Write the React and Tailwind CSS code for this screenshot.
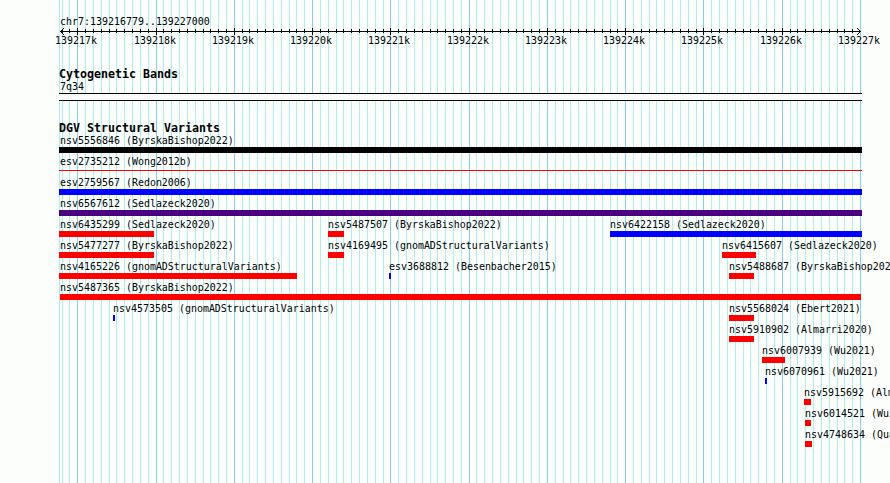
import React from 'react';
import clsx from 'clsx';

const REGION = { chr: 'chr7', start: 139216779, end: 139227000 };
const PAD_LEFT = 60;
const PLOT_WIDTH = 800;

const toX = (bp) =>
  Math.round(PAD_LEFT + ((bp - REGION.start) / (REGION.end - REGION.start)) * PLOT_WIDTH);

const TICKS = [];
for (let bp = 139216800; bp <= REGION.end; bp += 100) {
  TICKS.push({ bp, x: toX(bp), major: bp % 1000 === 0 });
}
const MAJOR_TICKS = TICKS.filter((t) => t.major);

const COLORS = {
  black: 'bg-black',
  red: 'bg-[#ff0000]',
  blue: 'bg-[#0000ff]',
  purple: 'bg-[#4b0082]',
};

// x / w are pixels inside the panel, one array per bumped row
const ROWS = [
  [{ name: 'nsv5556846 (ByrskaBishop2022)', x: 59, w: 803, color: 'black' }],
  [{ name: 'esv2735212 (Wong2012b)', x: 59, w: 803, color: 'red', thin: true }],
  [{ name: 'esv2759567 (Redon2006)', x: 59, w: 803, color: 'blue' }],
  [{ name: 'nsv6567612 (Sedlazeck2020)', x: 59, w: 803, color: 'purple' }],
  [
    { name: 'nsv6435299 (Sedlazeck2020)', x: 59, w: 95, color: 'red' },
    { name: 'nsv5487507 (ByrskaBishop2022)', x: 328, w: 16, color: 'red' },
    { name: 'nsv6422158 (Sedlazeck2020)', x: 610, w: 252, color: 'blue' },
  ],
  [
    { name: 'nsv5477277 (ByrskaBishop2022)', x: 59, w: 95, color: 'red' },
    { name: 'nsv4169495 (gnomADStructuralVariants)', x: 328, w: 16, color: 'red' },
    { name: 'nsv6415607 (Sedlazeck2020)', x: 722, w: 34, color: 'red' },
  ],
  [
    { name: 'nsv4165226 (gnomADStructuralVariants)', x: 59, w: 238, color: 'red' },
    { name: 'esv3688812 (Besenbacher2015)', x: 389, w: 2, color: 'blue' },
    { name: 'nsv5488687 (ByrskaBishop2022)', x: 729, w: 25, color: 'red' },
  ],
  [{ name: 'nsv5487365 (ByrskaBishop2022)', x: 60, w: 801, color: 'red' }],
  [
    { name: 'nsv4573505 (gnomADStructuralVariants)', x: 113, w: 2, color: 'blue' },
    { name: 'nsv5568024 (Ebert2021)', x: 729, w: 25, color: 'red' },
  ],
  [{ name: 'nsv5910902 (Almarri2020)', x: 729, w: 25, color: 'red' }],
  [{ name: 'nsv6007939 (Wu2021)', x: 762, w: 23, color: 'red' }],
  [{ name: 'nsv6070961 (Wu2021)', x: 765, w: 2, color: 'blue' }],
  [{ name: 'nsv5915692 (Almarri2020)', x: 804, w: 7, color: 'red' }],
  [{ name: 'nsv6014521 (Wu2021)', x: 805, w: 6, color: 'red' }],
  [{ name: 'nsv4748634 (Quan2021)', x: 805, w: 7, color: 'red' }],
];

const Label = ({ children, className = 'leading-[14px]' }) => (
  <div
    className={clsx('h-3 w-max origin-center scale-y-110 whitespace-pre text-[9.965px]', className)}
  >
    {children}
  </div>
);

const TrackTitle = ({ children }) => (
  <h2 className="ml-[59px] h-3 w-max whitespace-pre text-[11.63px] font-bold leading-3">
    {children}
  </h2>
);

const GridLines = () => (
  <svg width="890" height="483" shapeRendering="crispEdges" className="absolute left-0 top-0 -z-10">
    <rect x="59" y="0" width="1" height="483" fill="#afeeee" />
    {TICKS.map((t) => (
      <rect key={t.bp} x={t.x} y="0" width="1" height="483" fill={t.major ? '#87ceeb' : '#afeeee'} />
    ))}
  </svg>
);

const Ruler = () => (
  <svg width="890" height="9" shapeRendering="crispEdges" className="block">
    <rect x="60" y="4" width="801" height="1" />
    {TICKS.filter((t) => t.bp < REGION.end).map((t) => (
      <rect key={t.bp} x={t.x} y={t.major ? 1 : 2} width="1" height={t.major ? 7 : 4} />
    ))}
    {/* arrow heads, stepped one pixel at a time */}
    {[1, 2, 3].map((i) => (
      <g key={i}>
        <rect x={60 + i} y={4 - i} width="1" height="1" />
        <rect x={60 + i} y={4 + i} width="1" height="1" />
        <rect x={860 - i} y={4 - i} width="1" height="1" />
        <rect x={860 - i} y={4 + i} width="1" height="1" />
      </g>
    ))}
  </svg>
);

const Feature = ({ name, x, w, color, thin }) => (
  <div className="[grid-area:1/1]" style={{ marginLeft: x }}>
    <Label className={clsx('leading-[14px]', x === 59 && 'ml-px')}>{name}</Label>
    <div className={clsx(COLORS[color], thin ? 'mt-[3px] h-px' : 'mt-px h-1.5')} style={{ width: w }} />
  </div>
);

export default function App() {
  return (
    <main className="relative isolate h-[483px] w-[890px] overflow-hidden bg-[#fcfefc] font-['DejaVu_Sans_Mono',monospace] text-black">
      <GridLines />

      <header className="pt-[15px]">
        <Label className="ml-[60px] leading-[14px]">{`${REGION.chr}:${REGION.start}..${REGION.end}`}</Label>
        <Ruler />
        <div className="-mt-px grid h-3">
          {MAJOR_TICKS.map((t) => (
            <div key={t.bp} className="[grid-area:1/1]" style={{ marginLeft: t.x - 22 }}>
              <Label className="leading-3">{`${t.bp / 1000}k`}</Label>
            </div>
          ))}
        </div>
      </header>

      <section className="pt-[21px]">
        <TrackTitle>Cytogenetic Bands</TrackTitle>
        <Label className="ml-[60px] leading-[14px]">7q34</Label>
        <div className="ml-[59px] mt-px h-2 w-[803px] border-y border-black bg-[#fcfefc]" />
      </section>

      <section className="pt-[21px]">
        <TrackTitle>DGV Structural Variants</TrackTitle>
        {ROWS.map((row, i) => (
          <div key={i} className="grid h-[21px] w-[890px]">
            {row.map((feature) => (
              <Feature key={feature.name} {...feature} />
            ))}
          </div>
        ))}
      </section>
    </main>
  );
}
